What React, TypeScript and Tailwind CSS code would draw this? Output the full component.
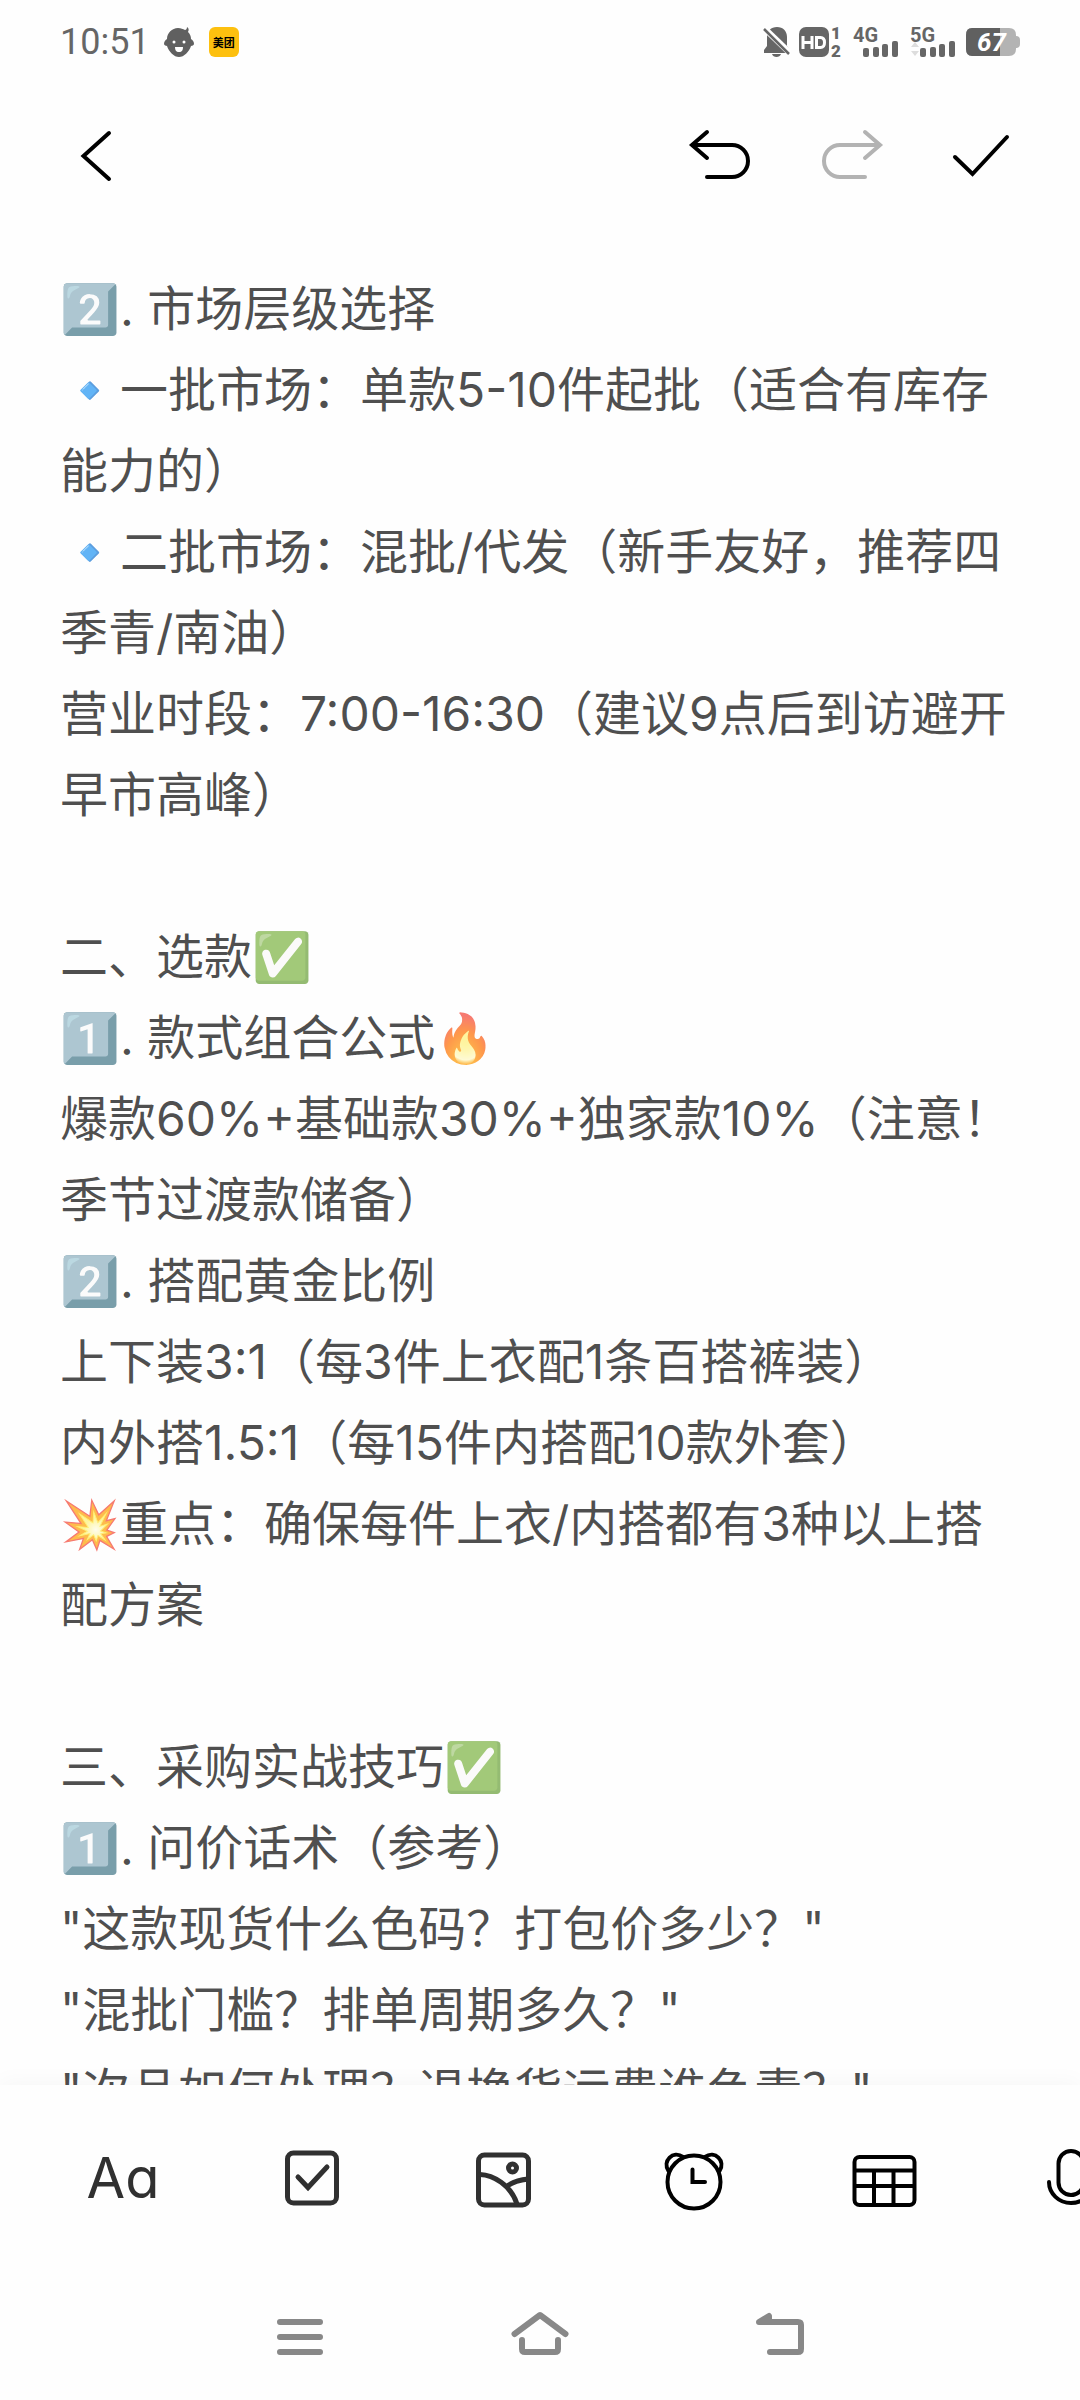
import React from 'react';

interface IconProps {
  children: React.ReactNode;
  color?: string;
  strokeWidth?: number;
}

const Icon: React.FC<IconProps> = ({ children, color = '#000000', strokeWidth = 4 }) => (
  <svg
    width="64"
    height="64"
    viewBox="0 0 64 64"
    fill="none"
    stroke={color}
    strokeWidth={strokeWidth}
    strokeLinecap="round"
    className="overflow-visible"
    aria-hidden="true"
  >
    {children}
  </svg>
);

const noteLines = [
  '2️⃣. 市场层级选择',
  '🔹一批市场：单款5-10件起批（适合有库存能力的）',
  '🔹二批市场：混批/代发（新手友好，推荐四季青/南油）',
  '营业时段：7:00-16:30（建议9点后到访避开早市高峰）',
  '',
  '二、选款✅',
  '1️⃣. 款式组合公式🔥',
  '爆款60%+基础款30%+独家款10%（注意！季节过渡款储备）',
  '2️⃣. 搭配黄金比例',
  '上下装3:1（每3件上衣配1条百搭裤装）',
  '内外搭1.5:1（每15件内搭配10款外套）',
  '💥重点：确保每件上衣/内搭都有3种以上搭配方案',
  '',
  '三、采购实战技巧✅',
  '1️⃣. 问价话术（参考）',
  '"这款现货什么色码？打包价多少？"',
  '"混批门槛？排单周期多久？"',
  '"次品如何处理？退换货运费谁负责？"',
];

const SignalBars: React.FC<{ label: string; data?: boolean }> = ({ label, data }) => (
  <svg width="44" height="32" viewBox="0 0 44 32" fill="#666666" className="overflow-visible">
    <text x="-1" y="16" fontSize="20" fontWeight="700" fontFamily="Roboto, sans-serif">
      {label}
    </text>
    {data && <path d="M0 21l4-5 4 5zM0 25l4 5 4-5z" fill="#dddddd" />}
    <rect x="9" y="22" width="6" height="9" rx="2" />
    <rect x="19" y="21" width="6" height="10" rx="2" />
    <rect x="28" y="18" width="6" height="13" rx="2" />
    <rect x="38" y="15" width="6" height="16" rx="2" />
  </svg>
);

const StatusBar: React.FC = () => (
  <div className="flex h-[84px] shrink-0 items-center justify-between px-[60px] text-[#666666]">
    <div className="flex items-center">
      <span className="font-[Roboto,sans-serif] text-[36px] leading-none">10:51</span>
      {/* Baby face */}
      <svg width="30" height="30" viewBox="0 0 30 30" className="ml-[14px]">
        <path
          d="M21 3C22 3 23 2 23 0c2 1 2 3 1 5 2 2 3 4 3 7 2 1 3 3 3 5 0 1-2 2-3 2-2 6-7 11-12 11S5 25 3 19c-1 0-3-1-3-2 0-2 1-4 3-5C3 6 8 1 14 1c3 0 5 1 7 2z"
          fill="#606060"
        />
        <circle cx="10" cy="15" r="1.500" fill="#ffffff" />
        <circle cx="20" cy="15" r="1.500" fill="#ffffff" />
        <path d="M11 20h8c0 3-1 5-4 5s-4-2-4-5z" fill="#ffffff" />
      </svg>
      <span className="ml-[15px] flex size-[30px] items-center justify-center rounded-md bg-[#fdc00f] font-['Noto_Sans_CJK_SC',sans-serif] text-[11px] leading-none font-bold text-black">
        美团
      </span>
    </div>
    <div className="flex items-center">
      {/* Muted bell */}
      <svg width="28" height="30" viewBox="0 0 28 30">
        <path d="M14 0c6 0 10 4 10 10v9l3 4v3H1v-3l3-4v-9C4 4 8 0 14 0zM9 27h9c-1 4-8 4-9 0z" fill="#666666" />
        <path d="M0 0L28 27" stroke="#ffffff" strokeWidth="6" />
        <path d="M1 2L26 27" stroke="#666666" strokeWidth="2.5" />
      </svg>
      <svg width="43" height="30" viewBox="0 0 43 30" className="ml-2 overflow-visible" fill="#666666">
        <rect width="30" height="30" rx="7" />
        <path d="M4 9v13M13 9v13M4 15.500h9M17.500 10.500h4q4 0 4 5t-4 5h-4z" stroke="#ffffff" strokeWidth="3" />
        <g fontSize="17" fontWeight="900" fontFamily="Roboto, sans-serif">
          <text x="32" y="12">1</text>
          <text x="32" y="30">2</text>
        </g>
      </svg>
      <div className="ml-3 flex gap-[13px]">
        <SignalBars label="4G" />
        <SignalBars label="5G" data />
      </div>
      <svg width="54" height="28" viewBox="0 0 54 28" className="ml-[11px]">
        <path d="M6 0h37q7 0 7 7v1q4 0 4 4v4q0 4-4 4v1q0 7-7 7H6q-6 0-6-7V7q0-7 6-7z" fill="#b3b3b3" />
        <path d="M6 0h28v28H6q-6 0-6-7V7q0-7 6-7z" fill="#606060" />
        <text x="11" y="23" fill="#ffffff" fontSize="26" fontWeight="700" fontStyle="italic" fontFamily="Roboto, sans-serif">
          67
        </text>
      </svg>
    </div>
  </div>
);

const headerButton = 'flex w-[130px] items-center justify-center';

const Header: React.FC = () => (
  <header className="flex h-36 shrink-0 items-stretch pr-[34px] pl-8">
    <button aria-label="返回" className={headerButton}>
      <Icon>
        <path d="M44 9L18.500 32L44 55" />
      </Icon>
    </button>
    <button aria-label="撤销" className={`${headerButton} ml-auto`}>
      <Icon>
        <path d="M18 8L3 21L18 34M4 21H43a16 16 0 0 1 0 32H18" />
      </Icon>
    </button>
    <button aria-label="重做" disabled className={headerButton}>
      <Icon color="#b3b3b3">
        <path d="M46 8L61 21L46 34M60 21H21a16 16 0 0 0 0 32H46" />
      </Icon>
    </button>
    <button aria-label="完成" className={headerButton}>
      <Icon>
        <path d="M6 33L23.500 50L58 13" />
      </Icon>
    </button>
  </header>
);

const toolButton = 'flex w-[190px] shrink-0 items-center justify-center';

const Toolbar: React.FC = () => (
  <div className="flex h-[186px] shrink-0 overflow-hidden pl-7">
    <button
      aria-label="Aa 文字样式"
      className={`${toolButton} font-[Inter,sans-serif] text-[56px] leading-none font-normal text-[#303030] [font-feature-settings:'cv11']`}
    >
      Aa
    </button>
    <button aria-label="待办" className={toolButton}>
      <Icon color="#303030" strokeWidth={5}>
        <rect x="6.500" y="7" width="49" height="50" rx="6" />
        <path d="M17 31L27 41.500L46 21" />
      </Icon>
    </button>
    <button aria-label="图片" className={toolButton}>
      <Icon color="#303030" strokeWidth={5}>
        <rect x="7.500" y="9" width="50" height="50" rx="6" />
        <circle cx="41.500" cy="22" r="4" />
        <path d="M9 28.500C22 29 40 39 46 58M36 40C42 36 48 34 57 33" />
      </Icon>
    </button>
    <button aria-label="提醒" className={toolButton}>
      <Icon>
        <circle cx="33" cy="36" r="26.500" />
        <path d="M31.500 23.500V36H44" />
        <path d="M7.500 25C1 15 12 4 22 11M44 11C54 4 65 15 58.500 25" />
      </Icon>
    </button>
    <button aria-label="表格" className={toolButton}>
      <Icon>
        <rect x="3.500" y="11" width="60" height="48" rx="5" />
        <path d="M4 24.500H63M4 40H63M23 25V58M42.500 25V58" />
      </Icon>
    </button>
    <button aria-label="录音" className={toolButton}>
      <Icon>
        <rect x="17.500" y="5" width="25" height="44" rx="12.500" />
        <path d="M8 36a22 21 0 0 0 44 0" />
      </Icon>
    </button>
  </div>
);

const navButton = 'flex w-60 items-center justify-center';

const NavBar: React.FC = () => (
  <nav className="flex h-[129px] shrink-0 justify-center">
    <button aria-label="最近任务" className={navButton}>
      <Icon color="#888888" strokeWidth={6}>
        <path d="M12 18H52M12 33H52M12 48H52" />
      </Icon>
    </button>
    <button aria-label="主屏幕" className={navButton}>
      <Icon color="#888888" strokeWidth={6}>
        <path d="M6.500 30L32 11L57.500 30" strokeLinejoin="round" />
        <path d="M14 36V45q0 3 3 3H47q3 0 3-3V36" />
      </Icon>
    </button>
    <button aria-label="后退" className={navButton}>
      <Icon color="#888888" strokeWidth={6}>
        <path d="M22 48H50q3 0 3-3V21q0-3-3-3H11L21 12V17" strokeLinejoin="round" />
      </Icon>
    </button>
  </nav>
);

const App: React.FC = () => {
  return (
    <div className="flex h-screen flex-col overflow-hidden bg-[#fefefe]">
      <StatusBar />
      <Header />
      <main
        lang="zh-CN"
        className="min-h-0 flex-1 overflow-hidden px-[60px] pt-10 font-[Inter,'Noto_Sans_CJK_SC',sans-serif] text-[48px] leading-[81px] text-black/70"
      >
        {noteLines.map((line, index) => (
          <p key={index} className="min-h-[81px]">
            {line}
          </p>
        ))}
      </main>
      <div className="relative shadow-[0_-4px_20px_rgba(0,0,0,0.03)]">
        <Toolbar />
        <NavBar />
      </div>
    </div>
  );
};

export default App;
